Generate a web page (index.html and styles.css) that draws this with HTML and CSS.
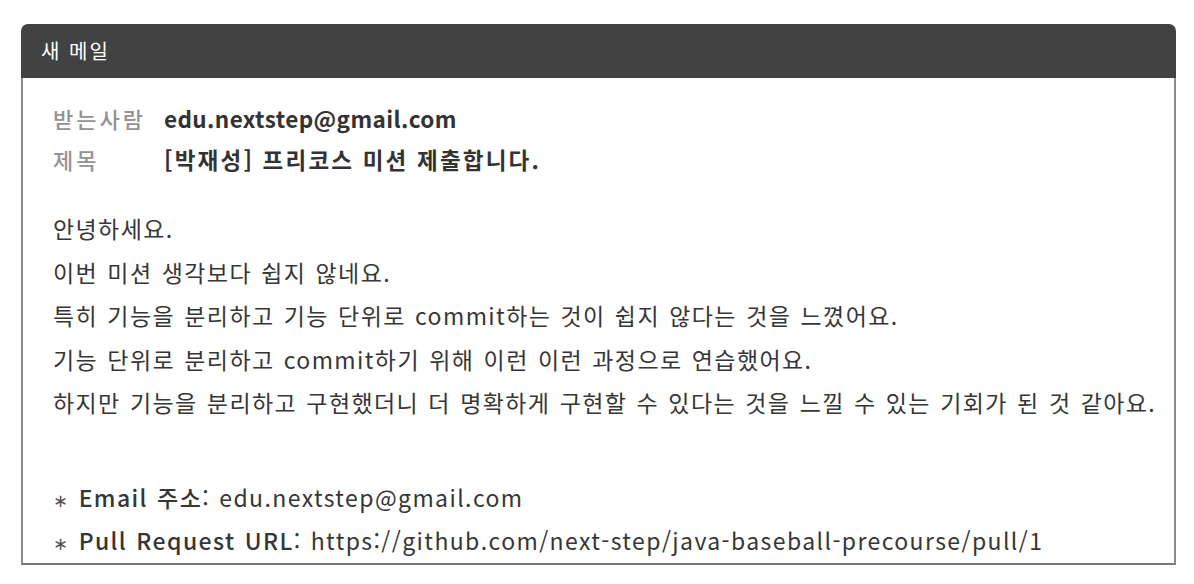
FILE: index.html
```html
<!DOCTYPE html>
<html lang="ko">
<head>
<meta charset="utf-8">
<title>새 메일</title>
<link rel="stylesheet" href="styles.css">
</head>
<body>
<div class="window">
  <div class="titlebar">새 메일</div>
  <div class="content">
    <div class="fields">
      <div class="field"><span class="label">받는사람</span><span class="value">edu.nextstep@gmail.com</span></div>
      <div class="field"><span class="label">제목</span><span class="value subject">[박재성] 프리코스 미션 제출합니다.</span></div>
    </div>
    <div class="message">
      <p>안녕하세요.</p>
      <p>이번 미션 생각보다 쉽지 않네요.</p>
      <p>특히 기능을 분리하고 기능 단위로 commit하는 것이 쉽지 않다는 것을 느꼈어요.</p>
      <p>기능 단위로 분리하고 commit하기 위해 이런 이런 과정으로 연습했어요.</p>
      <p>하지만 기능을 분리하고 구현했더니 더 명확하게 구현할 수 있다는 것을 느낄 수 있는 기회가 된 것 같아요.</p>
      <p class="blank">&nbsp;</p>
      <p><span class="star">∗</span> <b>Email 주소</b>: edu.nextstep@gmail.com</p>
      <p><span class="star">∗</span> <b>Pull Request URL</b>: https://github.com/next-step/java-baseball-precourse/pull/1</p>
    </div>
  </div>
</div>
</body>
</html>
```

FILE: styles.css
```css
html, body {
  margin: 0;
  padding: 0;
  background: #ffffff;
}
body {
  padding: 24px 0 0 21px;
  font-family: "Noto Sans CJK KR", "Noto Sans", sans-serif;
  color: #333333;
}
.window {
  width: 1155px;
}
.titlebar {
  height: 54px;
  box-sizing: border-box;
  background: #424242;
  border-radius: 7px 7px 0 0;
  color: #ffffff;
  font-size: 20px;
  line-height: 54px;
  padding-left: 20px;
  letter-spacing: 2px;
}
.content {
  border: 2px solid #8c8c8c;
  border-bottom-color: #787878;
  border-top: none;
  padding: 20px 0 0 30px;
}
.fields {
  display: flex;
  flex-direction: column;
}
.field {
  display: flex;
  line-height: 41px;
  font-size: 22px;
}
.label {
  width: 111px;
  color: #939393;
  font-weight: 500;
  letter-spacing: 3px;
}
.value {
  font-weight: 700;
  color: #333333;
  font-size: 22.5px;
  letter-spacing: 0.4px;
}
.subject {
  letter-spacing: 2.2px;
}
.message {
  margin-top: 27px;
  font-size: 23px;
  letter-spacing: 1.4px;
  word-spacing: 1.4px;
  color: #363636;
}
.message p {
  margin: 0;
  line-height: 43.5px;
}
.message b {
  font-weight: 500;
}
.star {
  color: #555555;
  font-size: 18px;
  line-height: 1;
}
.blank {
  height: 51px;
}
```
